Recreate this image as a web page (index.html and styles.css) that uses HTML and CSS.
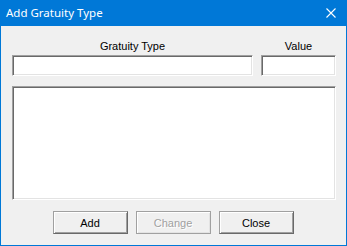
FILE: index.html
```html
<!DOCTYPE html>
<html lang="en">
<head>
  <meta charset="UTF-8">
  <title>Add Gratuity Type</title>
  <link rel="stylesheet" href="styles.css">
</head>
<body>
  <div class="dialog">
    <div class="titlebar">
      <span class="title">Add Gratuity Type</span>
      <svg class="close-x" width="10" height="10" viewBox="0 0 10 10">
        <path d="M0.5 0.5 L9.5 9.5 M9.5 0.5 L0.5 9.5" stroke="#fff" stroke-width="1.1" fill="none"/>
      </svg>
    </div>

    <div class="content">
      <div class="fields">
        <label class="field-label" for="type-input">Gratuity Type</label>
        <label class="field-label" for="value-input">Value</label>
        <input class="sunken" id="type-input" type="text">
        <input class="sunken" id="value-input" type="text">
      </div>

      <div class="listbox sunken"></div>

      <div class="buttons">
        <button class="win-button">Add</button>
        <button class="win-button" disabled>Change</button>
        <button class="win-button">Close</button>
      </div>
    </div>
  </div>
</body>
</html>
```

FILE: styles.css
```css
html, body {
  margin: 0;
  background: #f0f0f0;
}

.dialog {
  box-sizing: border-box;
  width: 347px;
  height: 246px;
  border: 1px solid #0078d7;
  border-top: none;
  background: #f0f0f0;
  display: flex;
  flex-direction: column;
  font-family: "Liberation Sans", Arial, sans-serif;
  font-size: 11px;
  color: #000;
}

.titlebar {
  height: 26px;
  margin: 0 -1px;
  background: #0078d7;
  display: flex;
  align-items: center;
  justify-content: space-between;
  padding: 0 11px 0 6px;
}

.title {
  font-family: "Noto Sans", "Open Sans", sans-serif;
  font-size: 11.5px;
  color: #fff;
  margin-top: -1px;
}

.close-x {
  display: block;
}

.content {
  flex: 1;
  display: flex;
  flex-direction: column;
  padding: 13px 10px 0 11px;
}

.fields {
  display: grid;
  grid-template-columns: 1fr 75px;
  column-gap: 8px;
  row-gap: 2px;
}

.field-label {
  text-align: center;
  line-height: 14px;
  height: 14px;
}

.sunken {
  box-sizing: border-box;
  background: #fff;
  border-top: 1px solid #a0a0a0;
  border-left: 1px solid #a0a0a0;
  border-right: 1px solid #fff;
  border-bottom: 1px solid #fff;
  box-shadow: inset 1px 1px 0 #696969, inset -1px -1px 0 #e3e3e3;
}

input.sunken {
  height: 21px;
  width: 100%;
  margin: 0;
  padding: 0 3px;
  font: inherit;
  outline: none;
}

.listbox {
  margin-top: 10px;
  height: 114px;
}

.buttons {
  display: flex;
  justify-content: center;
  gap: 8px;
  margin-top: 11px;
  padding-right: 2px;
}

.win-button {
  box-sizing: border-box;
  width: 75px;
  height: 23px;
  margin: 0;
  padding: 0;
  background: #f0f0f0;
  font: inherit;
  color: #000;
  border-top: 1px solid #a0a0a0;
  border-left: 1px solid #a0a0a0;
  border-right: 1px solid #696969;
  border-bottom: 1px solid #696969;
  box-shadow: inset 1px 1px 0 #fff, inset -1px -1px 0 #a0a0a0;
}

.win-button:disabled {
  color: #a0a0a0;
  text-shadow: 1px 1px 0 #fff;
  border-right-color: #a0a0a0;
  border-bottom-color: #a0a0a0;
  box-shadow: inset 1px 1px 0 #fff, inset -1px -1px 0 #e3e3e3;
}
```
